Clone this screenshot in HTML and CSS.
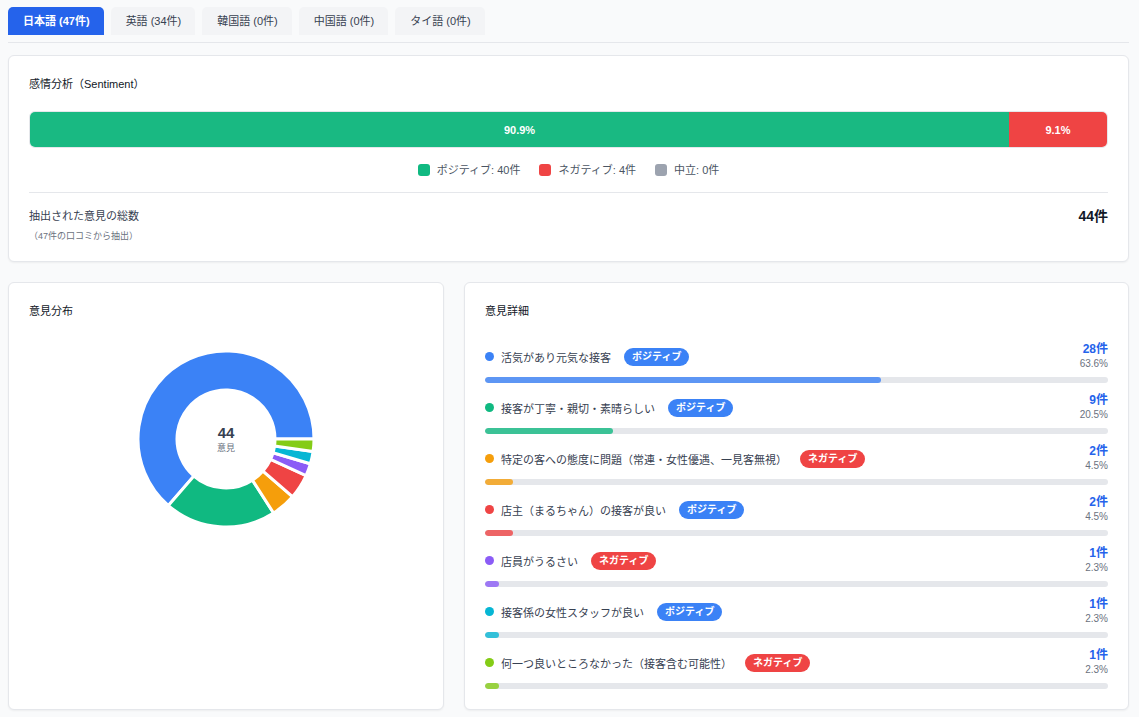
FILE: index.html
```html
<!DOCTYPE html>
<html>
    <head>
        <meta charset="utf-8">
        <title>意見分析</title>
        <link rel="stylesheet" href="styles.css">
    </head>
    <body>
        <div class="tabs">
            <div class="tab active">日本語 (47件)</div>
            <div class="tab">英語 (34件)</div>
            <div class="tab">韓国語 (0件)</div>
            <div class="tab">中国語 (0件)</div>
            <div class="tab">タイ語 (0件)</div>
        </div>

        <div class="card sentiment">
            <div class="card-title">感情分析（Sentiment）</div>
            <div class="sent-bar">
                <div class="sent-pos" style="width: 90.9%">90.9%</div>
                <div class="sent-neg" style="width: 9.1%">9.1%</div>
            </div>
            <div class="legend">
                <div class="legend-item"><span class="sq pos"></span>ポジティブ: 40件</div>
                <div class="legend-item"><span class="sq neg"></span>ネガティブ: 4件</div>
                <div class="legend-item"><span class="sq neu"></span>中立: 0件</div>
            </div>
            <div class="total">
                <div>
                    <div class="total-label">抽出された意見の総数</div>
                    <div class="total-sub">（47件の口コミから抽出）</div>
                </div>
                <div class="total-value">44件</div>
            </div>
        </div>

        <div class="grid">
            <div class="card">
                <div class="card-title">意見分布</div>
                <div class="chart">
                    <svg id="donut" width="200" height="200" viewBox="0 0 200 200"></svg>
                    <div class="chart-center">
                        <div class="chart-num">44</div>
                        <div class="chart-label">意見</div>
                    </div>
                </div>
            </div>
            <div class="card">
                <div class="card-title">意見詳細</div>
                <div class="items" id="items"></div>
            </div>
        </div>

        <script>
            var opinions = [
                { text: '活気があり元気な接客', type: 'pos', count: 28, pct: 63.6, color: '#3b82f6' },
                { text: '接客が丁寧・親切・素晴らしい', type: 'pos', count: 9, pct: 20.5, color: '#10b981' },
                { text: '特定の客への態度に問題（常連・女性優遇、一見客無視）', type: 'neg', count: 2, pct: 4.5, color: '#f59e0b' },
                { text: '店主（まるちゃん）の接客が良い', type: 'pos', count: 2, pct: 4.5, color: '#ef4444' },
                { text: '店員がうるさい', type: 'neg', count: 1, pct: 2.3, color: '#8b5cf6' },
                { text: '接客係の女性スタッフが良い', type: 'pos', count: 1, pct: 2.3, color: '#06b6d4' },
                { text: '何一つ良いところなかった（接客含む可能性）', type: 'neg', count: 1, pct: 2.3, color: '#84cc16' }
            ];

            var list = document.getElementById('items');
            opinions.forEach(function (op) {
                var el = document.createElement('div');
                el.className = 'item';
                el.innerHTML =
                    '<div class="item-head">' +
                        '<div class="item-left">' +
                            '<span class="dot" style="background:' + op.color + '"></span>' +
                            '<span class="item-text">' + op.text + '</span>' +
                            '<span class="badge ' + op.type + '">' + (op.type == 'pos' ? 'ポジティブ' : 'ネガティブ') + '</span>' +
                        '</div>' +
                        '<div class="item-right">' +
                            '<div class="count">' + op.count + '件</div>' +
                            '<div class="pct">' + op.pct + '%</div>' +
                        '</div>' +
                    '</div>' +
                    '<div class="track"><div class="fill" style="width:' + op.pct + '%;background:' + op.color + '"></div></div>';
                list.appendChild(el);
            });

            // donut, counter-clockwise from 3 o'clock
            var svg = document.getElementById('donut');
            var total = 44, cx = 100, cy = 100, R = 88, r = 49;
            var start = 0;
            function pt(rad, a) {
                return (cx + rad * Math.cos(a)).toFixed(2) + ' ' + (cy - rad * Math.sin(a)).toFixed(2);
            }
            opinions.forEach(function (op) {
                var sweep = op.count / total * Math.PI * 2;
                var end = start + sweep;
                var large = sweep > Math.PI ? 1 : 0;
                var d = 'M ' + pt(R, start) +
                    ' A ' + R + ' ' + R + ' 0 ' + large + ' 0 ' + pt(R, end) +
                    ' L ' + pt(r, end) +
                    ' A ' + r + ' ' + r + ' 0 ' + large + ' 1 ' + pt(r, start) + ' Z';
                var p = document.createElementNS('http://www.w3.org/2000/svg', 'path');
                p.setAttribute('d', d);
                p.setAttribute('fill', op.color);
                p.setAttribute('stroke', '#fff');
                p.setAttribute('stroke-width', '3');
                svg.appendChild(p);
                start = end;
            });
        </script>
    </body>
</html>
```

FILE: styles.css
```css
* {
    box-sizing: border-box;
}
body {
    margin: 0;
    padding: 7px 10px 8px 8px;
    background: #f9fafb;
    color: #374151;
    font-family: "Liberation Sans", "Noto Sans CJK JP", sans-serif;
    font-size: 11px;
}
.tabs {
    display: flex;
    gap: 7px;
    padding-bottom: 7px;
    border-bottom: 1px solid #e5e7eb;
    margin-bottom: 12px;
}
.tab {
    height: 28px;
    line-height: 28px;
    padding: 0 14px 0 15px;
    background: #f3f4f6;
    color: #374151;
    border-radius: 5px 5px 0 0;
    font-size: 11px;
}
.tab.active {
    background: #2563eb;
    color: #fff;
    font-weight: 700;
}
.card {
    background: #fff;
    border: 1px solid #e5e7eb;
    border-radius: 6px;
    box-shadow: 0 1px 2px rgba(0, 0, 0, 0.05);
    padding: 19px 20px 20px 20px;
}
.card-title {
    font-size: 11px;
    line-height: 18px;
    color: #111827;
}
.sentiment {
    padding-bottom: 18px;
}
.sent-bar {
    display: flex;
    height: 37px;
    margin-top: 18px;
    border-radius: 6px;
    overflow: hidden;
    border: 1px solid #e5e7eb;
}
.sent-pos, .sent-neg {
    display: flex;
    align-items: center;
    justify-content: center;
    color: #fff;
    font-weight: 700;
    font-size: 11px;
}
.sent-pos {
    background: #19b982;
}
.sent-neg {
    background: #ef4444;
}
.legend {
    display: flex;
    justify-content: center;
    gap: 19px;
    margin-top: 14px;
    line-height: 16px;
    color: #4b5563;
}
.legend-item {
    display: flex;
    align-items: center;
    gap: 7px;
}
.sq {
    width: 12px;
    height: 12px;
    border-radius: 3px;
}
.sq.pos { background: #10b981; }
.sq.neg { background: #ef4444; }
.sq.neu { background: #9ca3af; }
.total {
    display: flex;
    justify-content: space-between;
    align-items: flex-start;
    margin-top: 14px;
    padding-top: 15px;
    border-top: 1px solid #e5e7eb;
}
.total-label {
    line-height: 17px;
    color: #374151;
}
.total-sub {
    margin-top: 4px;
    font-size: 9px;
    line-height: 14px;
    color: #6b7280;
}
.total-value {
    font-size: 14px;
    font-weight: 700;
    line-height: 17px;
    color: #111827;
}
.grid {
    display: grid;
    grid-template-columns: 436px 1fr;
    gap: 20px;
    margin-top: 20px;
}
.chart {
    position: relative;
    display: flex;
    justify-content: center;
    margin-top: 19px;
}
.chart-center {
    position: absolute;
    top: 0;
    left: 0;
    right: 0;
    height: 200px;
    display: flex;
    flex-direction: column;
    align-items: center;
    justify-content: center;
}
.chart-num {
    font-size: 15px;
    font-weight: 700;
    color: #374151;
    line-height: 18px;
}
.chart-label {
    font-size: 9px;
    color: #6b7280;
    line-height: 13px;
}
.items {
    display: flex;
    flex-direction: column;
    gap: 10px;
    margin-top: 22px;
}
.item-head {
    display: flex;
    justify-content: space-between;
    align-items: center;
}
.item-left {
    display: flex;
    align-items: center;
}
.dot {
    width: 9px;
    height: 9px;
    border-radius: 50%;
    margin-right: 7px;
}
.item-text {
    font-size: 11px;
    color: #374151;
}
.badge {
    margin-left: 13px;
    height: 18px;
    line-height: 18px;
    padding: 0 8px;
    border-radius: 9px;
    color: #fff;
    font-size: 10px;
    font-weight: 700;
}
.badge.pos { background: #3b82f6; }
.badge.neg { background: #ef4444; }
.item-right {
    text-align: right;
}
.count {
    font-size: 12px;
    font-weight: 700;
    color: #2563eb;
    line-height: 15px;
}
.pct {
    font-size: 10px;
    color: #6b7280;
    line-height: 14px;
}
.track {
    margin-top: 6px;
    height: 6px;
    background: #e5e7eb;
    border-radius: 3px;
    overflow: hidden;
}
.fill {
    height: 100%;
    border-radius: 3px;
    opacity: 0.8;
}
```
